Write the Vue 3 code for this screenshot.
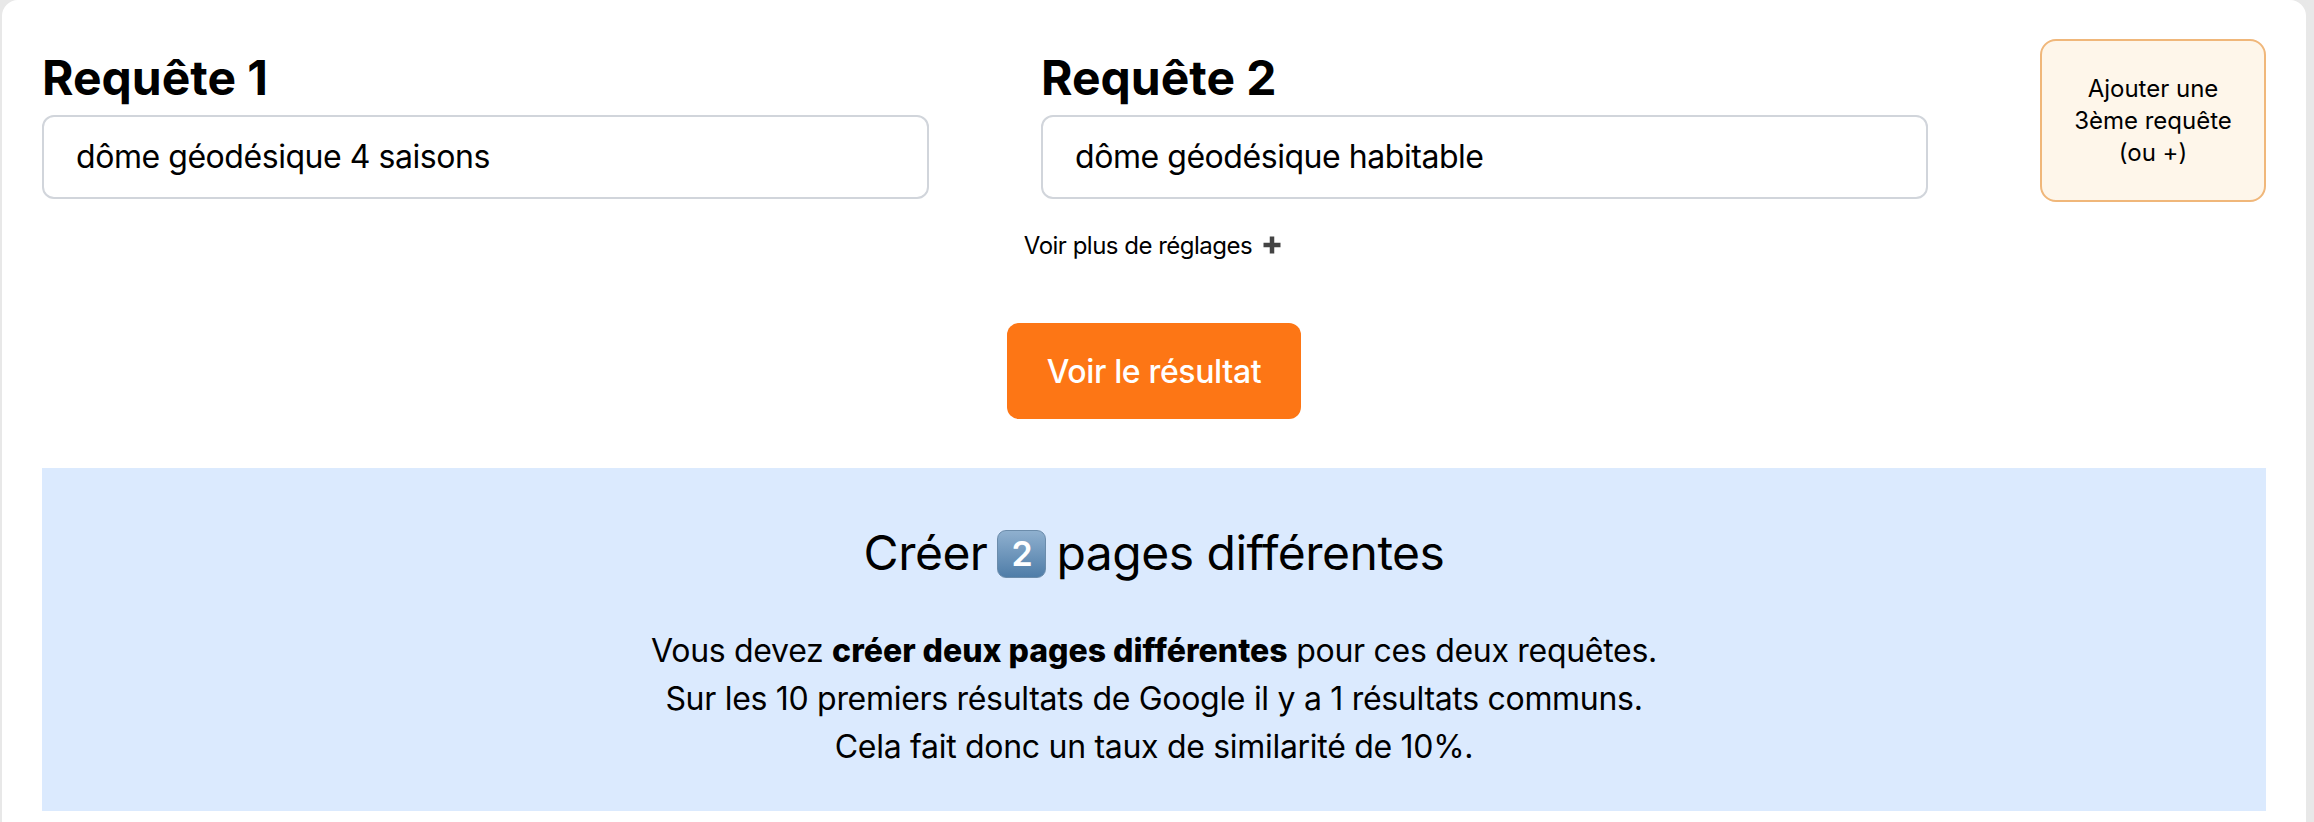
<template>
  <div class="page">
    <div class="card">
      <div class="queries">
        <div v-for="q in queries" :key="q.label" class="query">
          <h2 class="label">{{ q.label }}</h2>
          <input class="field" type="text" :value="q.value" />
        </div>
        <button class="add">Ajouter une 3ème requête (ou +)</button>
      </div>

      <div class="more">
        <span>Voir plus de réglages</span>
        <svg class="plus" viewBox="0 0 18 18" width="18" height="18">
          <path d="M9 0.5v17M0.5 9h17" stroke="#444" stroke-width="4.5" fill="none" />
        </svg>
      </div>

      <div class="actions">
        <button class="submit">Voir le résultat</button>
      </div>

      <section class="result">
        <h3 class="title">
          Créer <span class="keycap">2</span> pages différentes
        </h3>
        <p class="text">
          Vous devez <strong>créer deux pages différentes</strong> pour ces deux requêtes.<br />
          Sur les 10 premiers résultats de Google il y a 1 résultats communs.<br />
          Cela fait donc un taux de similarité de 10%.
        </p>
      </section>
    </div>
  </div>
</template>

<script setup>
const queries = [
  { label: "Requête 1", value: "dôme géodésique 4 saisons" },
  { label: "Requête 2", value: "dôme géodésique habitable" },
];
</script>

<style>
body {
  background: #e8e8e8;
}
</style>

<style scoped>
.page {
  height: 822px;
  padding: 0 8px 0 2px;
  box-sizing: border-box;
  overflow: hidden;
  font-family: Inter, "Noto Sans", sans-serif;
  color: #000;
}

.card {
  height: 822px;
  box-sizing: border-box;
  padding: 39px 40px 0;
  background: #fff;
  border-radius: 16px 16px 0 0;
}

.queries {
  display: grid;
  grid-template-columns: 887px 887px 226px;
  justify-content: space-between;
  align-items: start;
}

.label {
  margin: 0;
  height: 76px;
  font-size: 48px;
  line-height: 78px;
  font-weight: 700;
}

.field {
  display: block;
  width: 100%;
  height: 84px;
  box-sizing: border-box;
  padding: 0 32px 2px;
  border: 2px solid #d1d5db;
  border-radius: 12px;
  font-family: inherit;
  font-size: 32px;
  letter-spacing: -0.45px;
  color: #000;
  background: #fff;
  outline: none;
}

.add {
  height: 163px;
  padding: 0 24px;
  border: 2px solid #f0b77a;
  border-radius: 16px;
  background: #fef6ea;
  font-family: inherit;
  font-size: 24px;
  line-height: 32px;
  color: #000;
}

.more {
  display: flex;
  justify-content: center;
  align-items: center;
  gap: 11px;
  margin-top: 25px;
  padding-right: 3px;
  height: 36px;
  font-size: 24px;
  letter-spacing: -0.5px;
}

.actions {
  display: flex;
  justify-content: center;
  margin-top: 60px;
}

.submit {
  width: 294px;
  height: 96px;
  border: none;
  border-radius: 12px;
  background: #fd7615;
  color: #fff;
  font-family: inherit;
  font-size: 32px;
  letter-spacing: -0.35px;
  font-weight: 500;
}

.result {
  height: 343px;
  box-sizing: border-box;
  margin-top: 49px;
  padding-top: 55px;
  background: #dbeafe;
  text-align: center;
}

.title {
  margin: 0;
  height: 60px;
  font-size: 48px;
  line-height: 60px;
  font-weight: 400;
  letter-spacing: -0.5px;
}

.keycap {
  display: inline-block;
  width: 49px;
  height: 48px;
  margin: 0 -3px;
  box-sizing: border-box;
  border: 1px solid #6b8cab;
  border-radius: 9px;
  background: linear-gradient(#8fb0cf, #4f7da8);
  color: #fff;
  font-size: 34px;
  line-height: 46px;
  font-weight: 600;
  vertical-align: 4px;
}

.text {
  margin: 44px 0 0;
  font-size: 32px;
  line-height: 48px;
  letter-spacing: -0.3px;
}

.text strong {
  font-weight: 800;
  letter-spacing: 0;
}
</style>
